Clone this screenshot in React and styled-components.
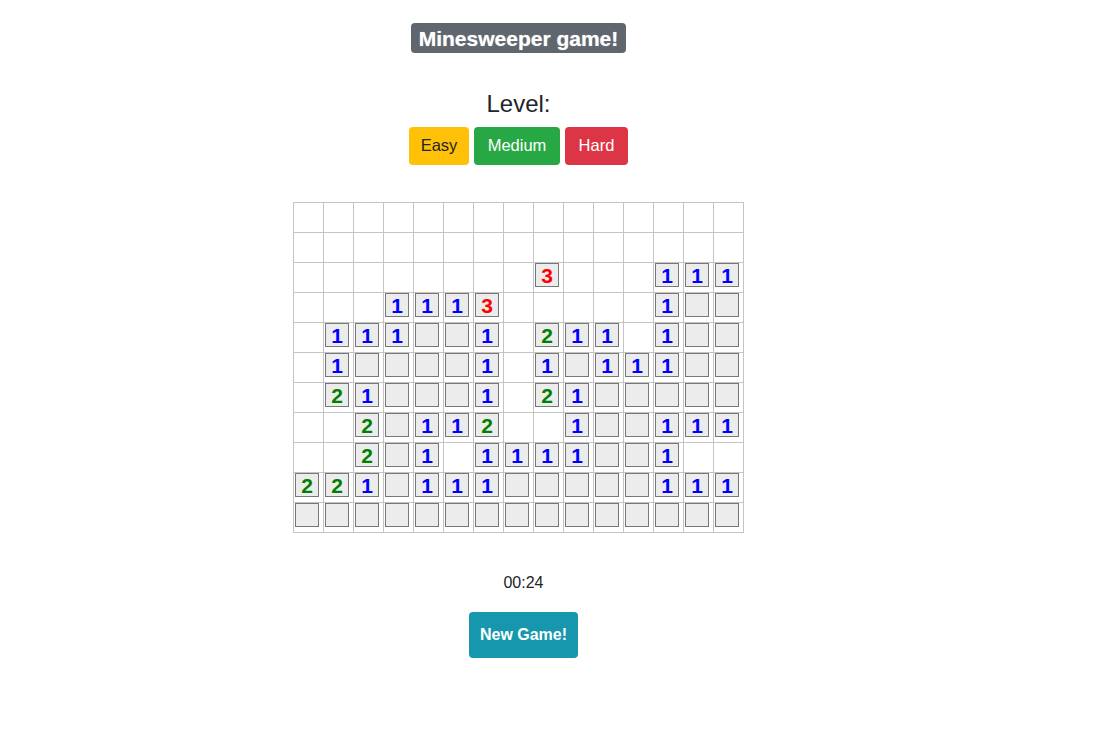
import React from 'react'
import styled, { createGlobalStyle } from 'styled-components'

const GlobalStyle = createGlobalStyle`
  body {
    margin: 0;
    background: #FFFFFF;
    font-family: "Liberation Sans", Arial, sans-serif;
    color: #212529;
  }
`;

// ' ' = opened blank, '.' = closed, digits = opened number
const BOARD = [
  '               ',
  '               ',
  '        3   111',
  '   1113     1..',
  ' 111..1 211 1..',
  ' 1....1 1.111..',
  ' 21...1 21.....',
  '  2.112  1..111',
  '  2.1 1111..1  ',
  '221.111.....111',
  '...............',
];

const NUM_COLORS = { 1: '#0000FF', 2: '#008000', 3: '#FF0000' };

export default function App() {
  return (
    <Page>
      <GlobalStyle />
      <Title>
        <Badge>Minesweeper game!</Badge>
      </Title>
      <LevelLabel>Level:</LevelLabel>
      <Levels>
        <LevelButton $bg='#FFC107' $fg='#212529' $w={60}>Easy</LevelButton>
        <LevelButton $bg='#28A745' $w={86}>Medium</LevelButton>
        <LevelButton $bg='#DC3545' $w={63}>Hard</LevelButton>
      </Levels>
      <Board>
        <tbody>
          {BOARD.map((row, r) => (
            <tr key={r}>
              {row.split('').map((c, i) => (
                <Cell key={i}>
                  {c !== ' ' && (
                    <Tile $color={NUM_COLORS[c]}>{c === '.' ? '' : c}</Tile>
                  )}
                </Cell>
              ))}
            </tr>
          ))}
        </tbody>
      </Board>
      <Footer>
        <Timer>00:24</Timer>
        <NewGame>New Game!</NewGame>
      </Footer>
    </Page>
  )
}

const Page = styled.div`
  width: 1037px;
  display: flex;
  flex-direction: column;
  align-items: center;
`;

const Title = styled.h3`
  margin: 23px 0 0;
  line-height: 1;
`;

const Badge = styled.span`
  display: inline-block;
  background: #60666D;
  color: #FFFFFF;
  font-size: 21px;
  font-weight: 700;
  line-height: 1;
  padding: 4.5px 8px;
  border-radius: 4px;
  text-shadow: 0 0 1px rgba(255, 255, 255, 0.6);
`;

const LevelLabel = styled.h4`
  margin: 37px 0 0;
  font-size: 24px;
  font-weight: 500;
  line-height: 1.2;
`;

const Levels = styled.div`
  display: flex;
  gap: 5px;
  margin-top: 8px;
`;

const LevelButton = styled.button`
  width: ${p => p.$w}px;
  height: 38px;
  padding: 0;
  border: none;
  border-radius: 4px;
  background: ${p => p.$bg};
  color: ${p => p.$fg || '#FFFFFF'};
  font-family: "Liberation Sans", Arial, sans-serif;
  font-size: 16.5px;
  cursor: pointer;
`;

const Board = styled.table`
  margin-top: 37px;
  border-collapse: collapse;
`;

const Cell = styled.td`
  width: 28px;
  height: 29px;
  padding: 0 0 0 1px;
  border: 1px solid #C4C4C4;
  vertical-align: top;
`;

const Tile = styled.div`
  width: 24px;
  height: 24px;
  box-sizing: border-box;
  background: #ECECEC;
  border: 1px solid #777777;
  color: ${p => p.$color || '#000000'};
  font-family: "Liberation Sans", Arial, sans-serif;
  font-size: 21px;
  font-weight: 700;
  line-height: 23px;
  text-align: center;
`;

const Footer = styled.div`
  display: flex;
  flex-direction: column;
  align-items: center;
  margin-top: 41px;
  padding-left: 10px;
`;

const Timer = styled.div`
  font-size: 16px;
  line-height: 18px;
`;

const NewGame = styled.button`
  margin-top: 20px;
  height: 46px;
  padding: 0 11px;
  border: none;
  border-radius: 4px;
  background: #1697AE;
  color: #FFFFFF;
  font-family: "Liberation Sans", Arial, sans-serif;
  font-size: 16px;
  font-weight: 700;
  cursor: pointer;
`;
